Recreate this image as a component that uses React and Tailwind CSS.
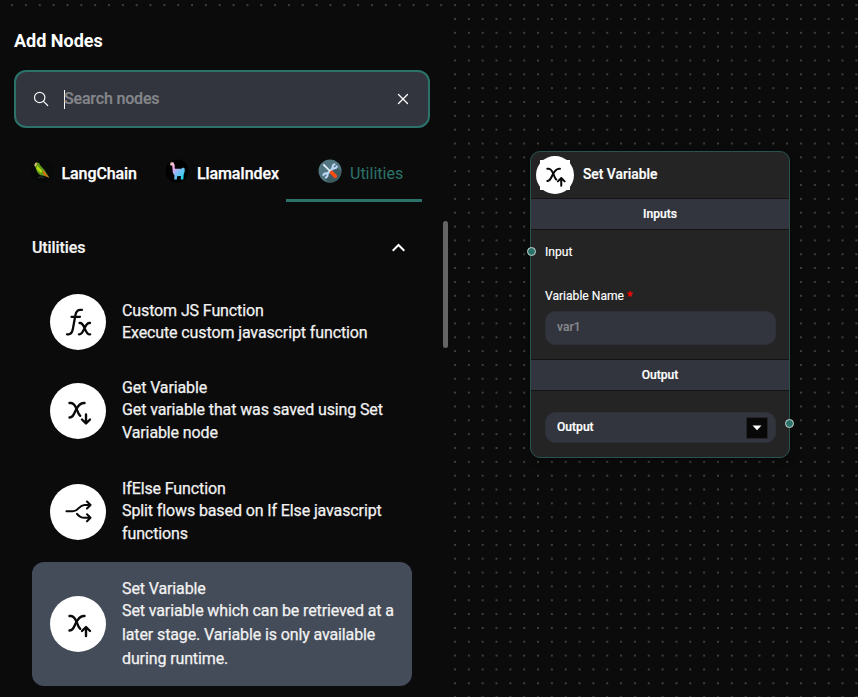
import React from 'react'

function VariableIcon({ up, className }) {
  return (
    <svg viewBox="0 0 32 32" className={className} fill="none" stroke="#0a0a0a" strokeWidth="2.400" strokeLinecap="round" strokeLinejoin="round">
      <path d="M7.500 8h1.500c3.200 0 4.500 3 6 7c1.100 3 1.700 4.800 3.200 5.800" />
      <path d="M22.500 8h-.8c-4 0 -6.200 3.500 -8.200 7.700c-1.800 3.800 -2.800 6.800 -6 6.800" />
      {up ? <path d="M24 28v-8.500M20 23l4 -4l4 4" /> : <path d="M24 19.500v8.500M20 24.500l4 4l4 -4" />}
    </svg>
  )
}

function FxIcon({ className }) {
  return (
    <svg viewBox="0 0 32 32" className={className} fill="none" stroke="#0a0a0a" strokeWidth="2.300" strokeLinecap="round" strokeLinejoin="round">
      <path d="M5 28.300h1.500c2.700 0 3.700 -2 4.300 -5l2.700 -14.500c.7 -3.500 2 -5 4.800 -5h1.700M9.500 10.800h8.500" />
      <path d="M17.500 17h.7c2.500 0 3.300 3 4.600 5.700s2.300 5.600 4.600 5.600h.8M28 17h-.7c-2.500 0 -3.500 2.500 -5 5.700s-2.700 5.600 -4.900 5.600h-.5" />
    </svg>
  )
}

function SplitIcon({ className }) {
  return (
    <svg viewBox="0 0 32 32" className={className} fill="none" stroke="#0a0a0a" strokeWidth="2.100" strokeLinecap="round" strokeLinejoin="round">
      <path d="M4.500 15.300h6.500c6 0 5.500 -6.300 11.500 -6.300h5.500M25 5.500l3.500 3.500l-3.500 3.500" />
      <path d="M15 17.800c2 2.500 3.500 4 7.500 4h5.500M25 18.300l3.500 3.500l-3.500 3.500" />
    </svg>
  )
}

function Parrot() {
  return (
    <svg viewBox="0 0 24 24" className="h-6 w-6 shrink-0">
      <circle cx="12" cy="12" r="11.500" fill="#080909" />
      <path d="M4.500 6.500c-.2-2 1-3 2.700-3 1.800.2 2.500 1.200 3 2.700l4.500 5 4.500 7.300-5.500-1.800c-4 .2-7-3.200-7.500-6.500z" fill="#5f9a17" />
      <path d="M4.500 7c-.1-2.200.8-3.200 2.200-3.400.4 1.300.1 2.400-.9 3.600z" fill="#e6b78b" />
      <path d="M7 6.500l5.500 5.500-1.500 2-4.500-4z" fill="#b5da12" />
      <path d="M12.500 10.500l7 8.700-6-3.700z" fill="#e56a10" />
      <path d="M8 18.800l3-1 3 1" stroke="#303b3a" fill="none" />
    </svg>
  )
}

function Llama() {
  return (
    <svg viewBox="0 0 24 24" className="h-6 w-6 shrink-0">
      <defs>
        <linearGradient id="llamaFill" x1="4" y1="3" x2="20" y2="16" gradientUnits="userSpaceOnUse">
          <stop offset="0" stopColor="#f6e6b8" />
          <stop offset=".35" stopColor="#f7a3e8" />
          <stop offset=".6" stopColor="#8cb8f5" />
          <stop offset="1" stopColor="#28d2ee" />
        </linearGradient>
      </defs>
      <circle cx="12" cy="12" r="11.500" fill="#000" />
      <path d="M6 2.500l.8 1.500 1.200-1.300.8 1.600.9 1.700v3.500l1 .3h5.500l1.800-1.300 1.700 1v3l-1 3-.4 5h-2.600l.3-3.500h-1.500l-2.300.3-.4 3.200H9.200l.3-3.700-1.700-3.300-.5-6.700-2.300-.8.6-2z" fill="url(#llamaFill)" />
    </svg>
  )
}

function Tools() {
  return (
    <svg viewBox="0 0 24 24" className="h-6 w-6 shrink-0">
      <circle cx="12" cy="12" r="11.500" fill="#527681" />
      <path d="M19.500 8.500l3.900 4.500a11.500 11.500 0 0 1-13 10.400L6 19z" fill="#3d5a60" />
      <path d="M8.500 15.500l7-7" stroke="#bcd7f6" strokeWidth="2.300" />
      <path d="M17.200 4.800l-2.300 1.500-.4 2.300 1 .9 2.300-.4 1.500-2.200" fill="none" stroke="#bcd7f6" strokeWidth="2" strokeLinejoin="round" />
      <path d="M4.900 16.800l1.500-2.200 2.300-.3 1 1-.4 2.200-2.200 1.600" fill="none" stroke="#bcd7f6" strokeWidth="2" strokeLinejoin="round" />
      <path d="M5.800 5.800L12.500 12.500" stroke="#e6f1fb" strokeWidth="1.700" strokeLinecap="round" />
      <path d="M13.500 13.500l3.800 3.800" stroke="#ff4b10" strokeWidth="3.600" strokeLinecap="round" />
    </svg>
  )
}

function NodeItem({ icon, title, lines, className }) {
  return (
    <div className={`flex w-[380px] items-center gap-4 rounded-xl pl-[18px] ${className}`}>
      <div className="flex h-14 w-14 shrink-0 items-center justify-center rounded-full bg-white">{icon}</div>
      <div className="whitespace-nowrap text-base tracking-[-0.115px] text-[#f2f2f2] [-webkit-text-stroke:0.25px]">
        {title}
        {lines}
      </div>
    </div>
  )
}

function AddNodesPanel() {
  return (
    <aside className="absolute left-0 top-[11px] flex h-[686px] w-[452px] flex-col rounded-tr-xl bg-[#0b0b0b] pl-[14px]">
      <h1 className="mt-[18px] text-[18px] font-bold leading-6 text-white">Add Nodes</h1>
      <div className="mt-[17px] flex h-[58px] w-[416px] items-center rounded-xl border-2 border-[#2b736a] bg-[#32353d] pl-4 pr-[18px]">
        <svg viewBox="0 0 18 18" className="h-[18px] w-[18px]" fill="none" stroke="#f5f5f5" strokeWidth="1.200" strokeLinecap="round">
          <circle cx="7.700" cy="7.500" r="5.200" />
          <path d="M11.500 11.300l4.200 4.200" />
        </svg>
        <div className="ml-[14px] h-[19px] w-px bg-white" />
        <span className="-ml-px flex-1 text-base font-medium leading-5 tracking-[-0.170px] text-[#85868a] [-webkit-text-stroke:0.2px]">Search nodes</span>
        <svg viewBox="0 0 14 14" className="h-[14px] w-[14px]" stroke="#fff" strokeWidth="1.300" strokeLinecap="round">
          <path d="M2.500 2.500l9 9M11.500 2.500l-9 9" />
        </svg>
      </div>
      <nav className="mt-[27px] flex h-[47px] w-[408px] text-base font-medium text-white">
        <div className="flex w-[136px] pl-4 pt-1 tracking-[-0.090px] [-webkit-text-stroke:0.25px]"><Tab icon={<Parrot />} label={<span className="-ml-[0.5px]">LangChain</span>} /></div>
        <div className="flex w-[136px] pl-[15px] pt-1 tracking-[-0.110px] [-webkit-text-stroke:0.25px]"><Tab icon={<Llama />} label="LlamaIndex" /></div>
        <div className="flex w-[136px] border-b-[3px] border-[#2b736a] pl-8 pt-1 font-normal text-[#2b736a]"><Tab icon={<Tools />} label="Utilities" /></div>
      </nav>
      <div className="mt-[19px] flex h-[476px] justify-between pr-1">
        <div className="ml-[18px] w-[380px]">
          <div className="flex h-[54px] items-center justify-between pr-[7px] text-base font-medium text-[#f5f5f5]">
            <span className="tracking-[-0.110px] [-webkit-text-stroke:0.2px]">Utilities</span>
            <svg viewBox="0 0 13 9" className="-mt-px h-[9px] w-[13px]" fill="none" stroke="#fff" strokeWidth="2"><path d="M.700 7.700l5.800-5.700 5.800 5.700" /></svg>
          </div>
          <NodeItem
            className="mt-[9px] h-[76px]"
            icon={<FxIcon className="h-8 w-8" />}
            title={<div className="leading-[22px]">Custom JS Function</div>}
            lines={<p className="-mt-px mb-px leading-[23px]">Execute custom javascript function</p>}
          />
          <NodeItem
            className="h-[101px]"
            icon={<VariableIcon className="h-8 w-8" />}
            title={<div className="leading-[22px]">Get Variable</div>}
            lines={<p className="-mt-px mb-px leading-[23px]">Get variable that was saved using Set<br />Variable node</p>}
          />
          <NodeItem
            className="h-[101px]"
            icon={<SplitIcon className="h-8 w-8" />}
            title={<div className="leading-[22px]">IfElse Function</div>}
            lines={<p className="-mt-px mb-px leading-[23px]">Split flows based on If Else javascript<br />functions</p>}
          />
          <NodeItem
            className="h-[124px] bg-[#454c59]"
            icon={<VariableIcon up className="h-8 w-8" />}
            title={<div className="-mb-px pt-px leading-[22px]">Set Variable</div>}
            lines={<p className="leading-[24px]">Set variable which can be retrieved at a<br />later stage. Variable is only available<br />during runtime.</p>}
          />
        </div>
        <div className="h-[127px] w-[5px] rounded-full bg-[#646464]" />
      </div>
    </aside>
  )
}

function Tab({ icon, label }) {
  return (
    <>
      {icon}
      <span className="ml-2 mt-[3px] leading-6">{label}</span>
    </>
  )
}

function SetVariableNode() {
  return (
    <section className="absolute left-[530px] top-[151px] h-[307px] w-[260px] rounded-[10px] border border-[#29534d] bg-[#242424] text-[12.1px] text-white shadow-[0_2px_10px_rgba(0,0,0,0.3)]">
      <header className="flex h-[46px] items-center pl-[5px]">
        <div className="relative -ml-[0.5px] flex h-[38px] w-[38px] items-center justify-center rounded-full bg-white">
          <div className="absolute inset-[4px] bg-white" />
          <VariableIcon up className="relative h-[27px] w-[27px]" />
        </div>
        <h2 className="-mt-[2px] ml-[9.5px] text-[13.840px] font-medium leading-5 [-webkit-text-stroke:0.2px]">Set Variable</h2>
      </header>
      <div className="flex h-8 items-center justify-center border-y border-[#141414] bg-[#32353d] font-medium [-webkit-text-stroke:0.2px]">Inputs</div>
      <div className="flex h-[129px] flex-col pl-[14px] pr-[13px] pt-[13px]">
        <span className="leading-[18px] [-webkit-text-stroke:0.15px]">Input</span>
        <span className="mt-[26px] leading-[18px] [-webkit-text-stroke:0.15px]">Variable Name <span className="font-bold text-[#f00]">*</span></span>
        <div className="mt-[6px] flex h-[34px] items-center rounded-[10px] border border-[#2d3037] bg-[#32353d] pb-[2px] pl-[11px] font-medium text-[#85868a] [-webkit-text-stroke:0.2px]">var1</div>
      </div>
      <div className="flex h-8 items-center justify-center border-y border-[#141414] bg-[#32353d] font-medium [-webkit-text-stroke:0.2px]">Output</div>
      <div className="pl-[14px] pr-[13px] pt-[21px]">
        <div className="flex h-[31px] items-center justify-between rounded-[10px] border border-[#2d3037] bg-[#32353d] pl-[11px] pr-[7px] font-medium">
          <span className="[-webkit-text-stroke:0.2px]">Output</span>
          <span className="flex h-[22px] w-[22px] items-center justify-center border border-[#23252a] bg-[#080808]">
            <svg viewBox="0 0 10 6" className="h-[6px] w-[10px]"><path d="M.500.500h9L5 5.300z" fill="#fff" /></svg>
          </span>
        </div>
      </div>
      <i className="absolute -left-[4px] top-[95px] h-[9px] w-[9px] rounded-full border border-[#c9d5d3] bg-[#2b736a]" />
      <i className="absolute -right-[4.5px] top-[267px] h-[9px] w-[9px] rounded-full border border-[#c9d5d3] bg-[#2b736a]" />
    </section>
  )
}

export default function App() {
  return (
    <main className="relative h-[697px] w-[858px] overflow-hidden bg-[#0b0b0b] font-['Roboto',sans-serif]">
      <svg className="absolute inset-0 h-full w-full">
        <defs>
          <pattern id="dots" x="5.200" y="-1.800" width="13.840" height="13.840" patternUnits="userSpaceOnUse">
            <circle cx="6.920" cy="6.920" r=".690" fill="#999" />
          </pattern>
        </defs>
        <rect width="858" height="697" fill="url(#dots)" />
      </svg>
      <SetVariableNode />
      <AddNodesPanel />
    </main>
  )
}
